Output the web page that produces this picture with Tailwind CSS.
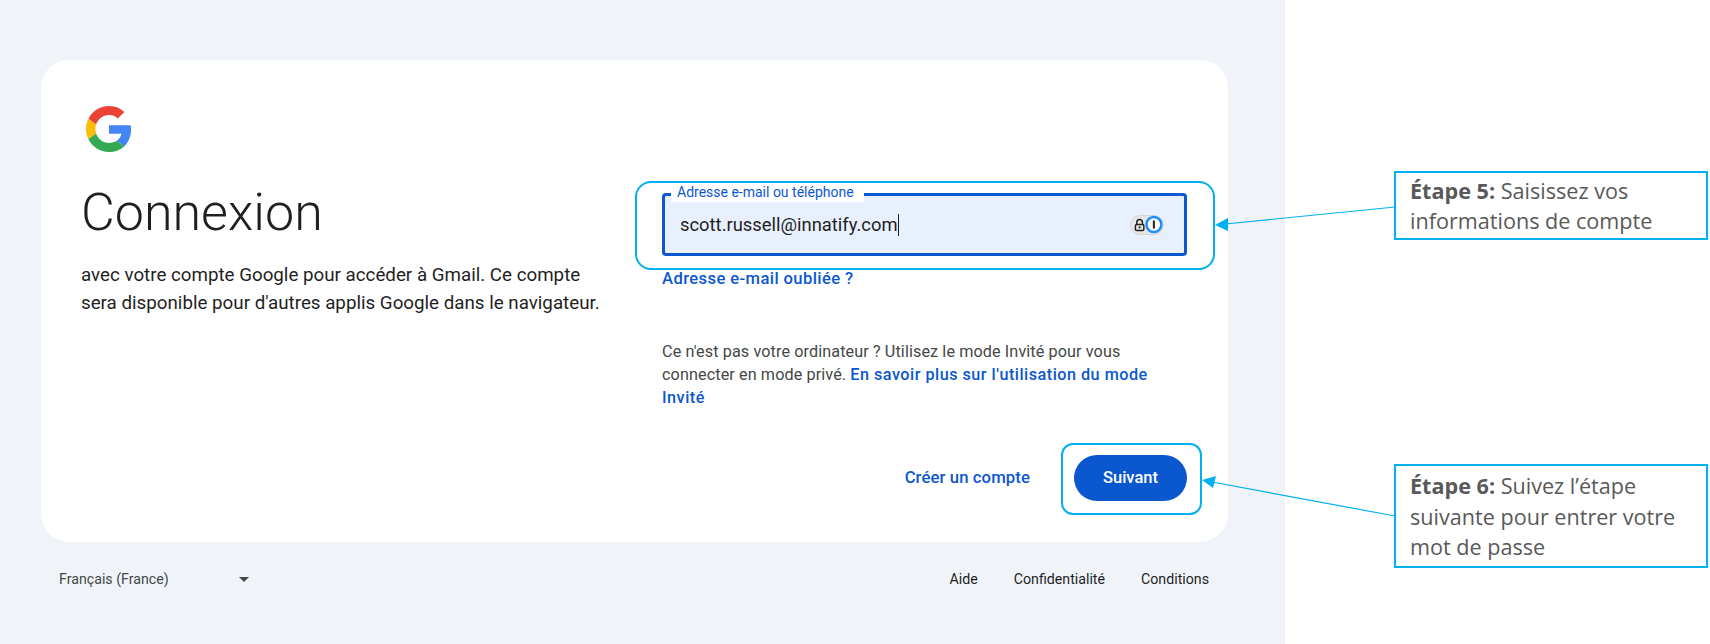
<!DOCTYPE html>
<html lang="fr">
<head>
    <meta charset="UTF-8">
    <meta name="viewport" content="width=device-width, initial-scale=1.0">
    <title>Connexion</title>
    <script src="https://cdn.jsdelivr.net/npm/@tailwindcss/browser@4"></script>
</head>
<body class="bg-white font-['Roboto',sans-serif]">
    <div class="relative w-[1710px] h-[644px] overflow-hidden">
        <!-- page Google -->
        <div class="w-[1285px] h-[644px] bg-[#f0f4f9] pt-[60px] pl-[41px]">
            <div class="w-[1187px] h-[482px] bg-white rounded-[28px] flex pl-[40px]">
                <!-- colonne gauche -->
                <div class="w-[581px] pt-[46px]">
                    <svg class="w-[46px] h-[46px] ml-[5px]" viewBox="0 0 48 48">
                        <path fill="#EA4335" d="M24 9.5c3.54 0 6.71 1.22 9.21 3.6l6.85-6.85C35.9 2.38 30.47 0 24 0 14.62 0 6.51 5.38 2.56 13.22l7.98 6.19C12.43 13.72 17.74 9.5 24 9.5z"/>
                        <path fill="#4285F4" d="M46.98 24.55c0-1.57-.15-3.09-.38-4.55H24v9.02h12.94c-.58 2.96-2.26 5.48-4.78 7.18l7.73 6c4.51-4.18 7.09-10.36 7.09-17.65z"/>
                        <path fill="#FBBC05" d="M10.53 28.59c-.48-1.45-.76-2.99-.76-4.59s.27-3.14.76-4.59l-7.98-6.19C.92 16.46 0 20.12 0 24c0 3.88.92 7.54 2.56 10.78l7.97-6.19z"/>
                        <path fill="#34A853" d="M24 48c6.48 0 11.93-2.13 15.89-5.81l-7.73-6c-2.15 1.45-4.92 2.3-8.16 2.3-6.26 0-11.57-4.22-13.47-9.91l-7.98 6.19C6.51 42.62 14.62 48 24 48z"/>
                    </svg>
                    <h1 class="mt-[31px] text-[52px] leading-[60px] font-light text-[#1f1f1f]">Connexion</h1>
                    <p class="mt-[18px] text-[18.75px] leading-[28px] text-[#1f1f1f] whitespace-nowrap">avec votre compte Google pour accéder à Gmail. Ce compte<br>sera disponible pour d'autres applis Google dans le navigateur.</p>
                </div>
                <!-- colonne droite -->
                <div class="w-[525px] pt-[133px]">
                    <div class="relative h-[63px] bg-[#e8f0fe] border-[3px] border-[#0b57d0] rounded-[4px] flex items-center justify-between pl-[15px] pr-[20px]">
                        <span class="absolute left-[6px] -top-[9px] w-[193px] h-[15px] bg-white pl-[6px] text-[14px] leading-[10px] text-[#0b57d0]">Adresse e-mail ou téléphone</span>
                        <span class="text-[18.4px] text-[#1f1f1f] border-r border-[#1f1f1f] leading-[22px]">scott.russell@innatify.com</span>
                        <div class="w-[34px] h-[20px] rounded-full bg-[#e6e6e6] border border-[#d4d4d4] flex items-center justify-between pl-[3px]">
                            <svg class="w-[12px] h-[14px]" viewBox="0 0 12 14">
                                <path d="M3 6V4a3 3 0 0 1 6 0v2" fill="none" stroke="#222" stroke-width="1.6"/>
                                <rect x="1.5" y="6.5" width="9" height="6.5" rx="1.5" fill="none" stroke="#222" stroke-width="1.6"/>
                                <rect x="5" y="8.5" width="2" height="2" fill="#222"/>
                            </svg>
                            <svg class="w-[19px] h-[19px]" viewBox="0 0 19 19">
                                <circle cx="9.5" cy="9.5" r="8" fill="#fff" stroke="#1a8cff" stroke-width="2.6"/>
                                <rect x="8.4" y="5" width="2.2" height="9" rx="1" fill="#222"/>
                            </svg>
                        </div>
                    </div>
                    <a class="block mt-[13px] text-[16.6px] leading-[20px] font-medium tracking-[0.4px] text-[#0b57d0]">Adresse e-mail oubliée ?</a>
                    <p class="mt-[51px] text-[16.2px] leading-[23px] tracking-[0.1px] text-[#444746] whitespace-nowrap">Ce n'est pas votre ordinateur ? Utilisez le mode Invité pour vous<br>connecter en mode privé. <a class="font-medium tracking-[0.5px] text-[#0b57d0]">En savoir plus sur l'utilisation du mode<br>Invité</a></p>
                    <div class="mt-[46px] flex items-center justify-end">
                        <a class="text-[16.7px] font-medium tracking-[0.1px] text-[#0b57d0]">Créer un compte</a>
                        <button class="ml-[44px] w-[113px] h-[46px] rounded-full bg-[#0b57d0] text-white text-[16.5px] font-medium">Suivant</button>
                    </div>
                </div>
            </div>
            <!-- pied de page -->
            <div class="w-[1187px] mt-[28px] flex items-center text-[14.2px] leading-[18px] text-[#1f1f1f]">
                <span class="ml-[18px] w-[180px] text-[#444746]">Français (France)</span>
                <span class="w-0 h-0 border-x-[5px] border-x-transparent border-t-[5px] border-t-[#444746]"></span>
                <div class="ml-auto mr-[19px] flex gap-[36px]">
                    <a>Aide</a>
                    <a>Confidentialité</a>
                    <a>Conditions</a>
                </div>
            </div>
        </div>

        <!-- annotations -->
        <div class="absolute left-[635px] top-[181px] w-[580px] h-[89px] border-2 border-[#00b0f0] rounded-[16px]"></div>
        <div class="absolute left-[1061px] top-[443px] w-[141px] h-[72px] border-2 border-[#00b0f0] rounded-[12px]"></div>
        <svg class="absolute left-0 top-0 w-[1710px] h-[644px] pointer-events-none" viewBox="0 0 1710 644">
            <line x1="1395" y1="207" x2="1225" y2="224" stroke="#00b0f0" stroke-width="1.2"/>
            <polygon points="1215,225 1228,218 1228,231" fill="#00b0f0"/>
            <line x1="1395" y1="516" x2="1212" y2="482" stroke="#00b0f0" stroke-width="1.2"/>
            <polygon points="1202,480 1216,476 1213,488" fill="#00b0f0"/>
        </svg>
        <div class="absolute left-[1394px] top-[171px] w-[314px] h-[69px] border-2 border-[#00b0f0] bg-white pl-[14px] pt-[3px] font-['Open_Sans',sans-serif] text-[21.6px] leading-[30px] text-[#595959] whitespace-nowrap">
            <b>Étape 5:</b> Saisissez vos<br>informations de compte
        </div>
        <div class="absolute left-[1394px] top-[464px] w-[314px] h-[104px] border-2 border-[#00b0f0] bg-white pl-[14px] pt-[5px] font-['Open_Sans',sans-serif] text-[21.6px] leading-[30.5px] text-[#595959] whitespace-nowrap">
            <b>Étape 6:</b> Suivez l’étape<br>suivante pour entrer votre<br>mot de passe
        </div>
    </div>
</body>
</html>
